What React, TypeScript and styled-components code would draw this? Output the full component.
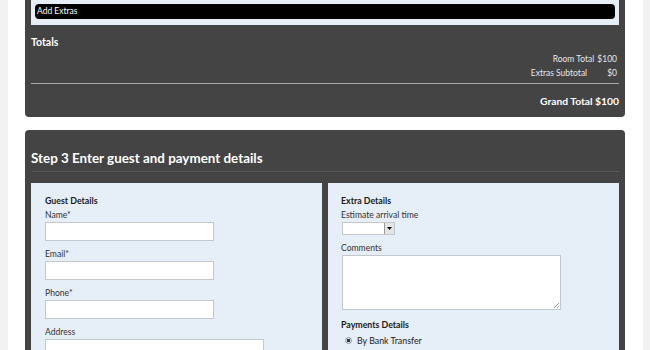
import React from 'react'
import styled, { createGlobalStyle } from 'styled-components'

const GlobalStyle = createGlobalStyle`
  html, body {
    margin: 0;
    padding: 0;
    background: #f2f2f2;
    font-family: Lato, "Liberation Sans", sans-serif;
  }
`

export default function App() {
  return (
    <>
      <GlobalStyle />
      <Styled.Page>
        <Styled.Panel>
          <Styled.ExtrasBox>
            <Styled.ExtrasBar>Add Extras</Styled.ExtrasBar>
          </Styled.ExtrasBox>
          <Styled.TotalsTitle>Totals</Styled.TotalsTitle>
          <Styled.TotalRows>
            <Styled.TotalRow gap={3}>
              <span>Room Total</span>
              <span>$100</span>
            </Styled.TotalRow>
            <Styled.TotalRow gap={20}>
              <span>Extras Subtotal</span>
              <span>$0</span>
            </Styled.TotalRow>
          </Styled.TotalRows>
          <Styled.Rule />
          <Styled.GrandTotal>Grand Total $100</Styled.GrandTotal>
        </Styled.Panel>

        <Styled.StepPanel>
          <Styled.StepHeader>Step 3 Enter guest and payment details</Styled.StepHeader>
          <Styled.Columns>
            <Styled.Column inset={14}>
              <Styled.Heading>Guest Details</Styled.Heading>
              <Styled.Label>Name*</Styled.Label>
              <Styled.Input width={169} />
              <Styled.Label spaced>Email*</Styled.Label>
              <Styled.Input width={169} />
              <Styled.Label spaced>Phone*</Styled.Label>
              <Styled.Input width={169} />
              <Styled.Label spaced>Address</Styled.Label>
              <Styled.Input width={219} />
            </Styled.Column>
            <Styled.Column inset={13}>
              <Styled.Heading>Extra Details</Styled.Heading>
              <Styled.Label>Estimate arrival time</Styled.Label>
              <Styled.Select>
                <Styled.SelectValue />
                <Styled.SelectButton>
                  <svg width="5" height="3" viewBox="0 0 5 3">
                    <path d="M0 0 L5 0 L2.5 3 Z" fill="#111" />
                  </svg>
                </Styled.SelectButton>
              </Styled.Select>
              <Styled.Label spaced>Comments</Styled.Label>
              <Styled.TextArea />
              <Styled.Heading spaced>Payments Details</Styled.Heading>
              <Styled.RadioRow>
                <Styled.Radio />
                <span>By Bank Transfer</span>
              </Styled.RadioRow>
            </Styled.Column>
          </Styled.Columns>
        </Styled.StepPanel>
      </Styled.Page>
    </>
  )
}

const Styled = {
  Page: styled.div`
    margin: 0 7px 0 8px;
    padding: 0 18px 40px 17px;
    background: #ffffff;
    height: 350px;
    box-sizing: border-box;
    overflow: hidden;
  `,
  Panel: styled.div`
    background: #444444;
    border-radius: 0 0 4px 4px;
    padding: 0 6px 8px 6px;
    color: #f2f2f2;
  `,
  ExtrasBox: styled.div`
    background: #e8eef6;
    padding: 4px 4px 6px 4px;
  `,
  ExtrasBar: styled.div`
    background: #000000;
    border-radius: 4px;
    height: 15px;
    line-height: 15px;
    padding-left: 2px;
    font-size: 8.5px;
    color: #ffffff;
  `,
  TotalsTitle: styled.div`
    margin-top: 10px;
    height: 14px;
    line-height: 14px;
    font-size: 10.5px;
    font-weight: 700;
    color: #ffffff;
  `,
  TotalRows: styled.div`
    margin-top: 3px;
  `,
  TotalRow: styled.div<{ gap: number }>`
    display: flex;
    justify-content: flex-end;
    gap: ${({ gap }) => gap}px;
    height: 14px;
    line-height: 14px;
    padding-right: 2px;
    font-size: 8.5px;
    color: #e6e6e6;
  `,
  Rule: styled.div`
    margin-top: 3px;
    height: 1px;
    background: #a8a8a8;
  `,
  GrandTotal: styled.div`
    margin-top: 9px;
    height: 16px;
    line-height: 16px;
    text-align: right;
    font-size: 10.3px;
    font-weight: 700;
    color: #ffffff;
  `,
  StepPanel: styled.div`
    margin-top: 13px;
    background: #444444;
    border-radius: 4px 4px 0 0;
    padding: 0 6px;
    height: 240px;
  `,
  StepHeader: styled.div`
    padding: 19px 0 4px 0;
    height: 18px;
    line-height: 18px;
    border-bottom: 1px solid #565656;
    font-size: 13.4px;
    font-weight: 700;
    color: #ffffff;
  `,
  Columns: styled.div`
    margin-top: 11px;
    display: grid;
    grid-template-columns: 291px 291px;
    gap: 6px;
  `,
  Column: styled.div<{ inset: number }>`
    background: #e6eef7;
    padding: 11px 13px 20px ${({ inset }) => inset}px;
    display: flex;
    flex-direction: column;
    align-items: flex-start;
    height: 200px;
    color: #222222;
  `,
  Heading: styled.div<{ spaced?: boolean }>`
    margin-top: ${({ spaced }) => (spaced ? '8px' : '0')};
    height: 14px;
    line-height: 14px;
    font-size: 8.8px;
    font-weight: 700;
    color: #1a1a1a;
  `,
  Label: styled.div<{ spaced?: boolean }>`
    margin-top: ${({ spaced }) => (spaced ? '6px' : '0')};
    height: 14px;
    line-height: 14px;
    font-size: 8.6px;
    color: #333333;
  `,
  Input: styled.div<{ width: number }>`
    width: ${({ width }) => width}px;
    height: 19px;
    box-sizing: border-box;
    background: #ffffff;
    border: 1px solid #c4c8cc;
  `,
  Select: styled.div`
    display: flex;
    width: 53px;
    height: 13px;
    margin-left: 1px;
    box-sizing: border-box;
    background: #ffffff;
    border: 1px solid #c4c8cc;
  `,
  SelectValue: styled.div`
    flex: 1;
  `,
  SelectButton: styled.div`
    width: 9px;
    display: flex;
    align-items: center;
    justify-content: center;
    background: #e4e4e4;
    border-left: 1px solid #9a9a9a;
  `,
  TextArea: styled.div`
    position: relative;
    width: 219px;
    height: 55px;
    margin-left: 1px;
    box-sizing: border-box;
    background: #ffffff;
    border: 1px solid #c4c8cc;

    &::after {
      content: '';
      position: absolute;
      right: 1px;
      bottom: 1px;
      width: 5px;
      height: 5px;
      background: linear-gradient(135deg, transparent 45%, #999 45%, #999 55%, transparent 55%, transparent 75%, #999 75%, #999 85%, transparent 85%);
    }
  `,
  RadioRow: styled.div`
    display: flex;
    align-items: center;
    gap: 5px;
    height: 16px;
    padding-left: 4px;
    font-size: 8.8px;
    color: #222222;
  `,
  Radio: styled.span`
    width: 7px;
    height: 7px;
    border-radius: 50%;
    box-sizing: border-box;
    border: 1px solid #8a9aa8;
    background: radial-gradient(circle, #334 0 1.5px, #dde3ea 2px);
  `,
}
